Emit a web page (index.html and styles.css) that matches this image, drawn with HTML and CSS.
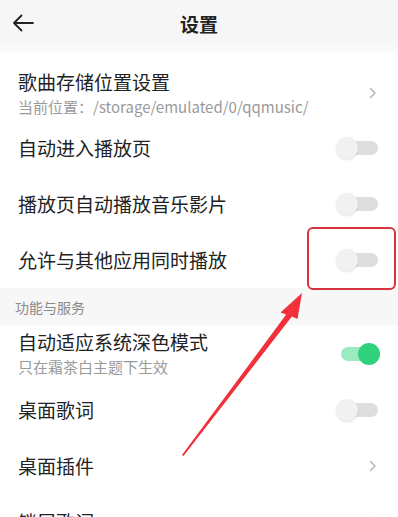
FILE: index.html
```html
<!DOCTYPE html>
<html lang="zh">
<head>
<meta charset="utf-8">
<link rel="stylesheet" href="styles.css">
</head>
<body>
<div class="page">
  <header class="topbar">
    <svg class="back" width="22" height="18" viewBox="0 0 22 18"><path d="M21 9H2M9.5 1.5L2 9l7.5 7.5" fill="none" stroke="#222" stroke-width="1.8" stroke-linecap="round" stroke-linejoin="round"/></svg>
    <h1 class="title">设置</h1>
  </header>

  <div class="row row-first">
    <div class="texts">
      <div class="label">歌曲存储位置设置</div>
      <div class="sub">当前位置：/storage/emulated/0/qqmusic/</div>
    </div>
    <svg class="chev" width="8" height="12" viewBox="0 0 8 12"><path d="M1.5 1.5L6 6l-4.5 4.5" fill="none" stroke="#b5b5b5" stroke-width="1.5" stroke-linecap="round" stroke-linejoin="round"/></svg>
  </div>

  <div class="row">
    <div class="label">自动进入播放页</div>
    <span class="switch"><span class="knob"></span></span>
  </div>
  <div class="row">
    <div class="label">播放页自动播放音乐影片</div>
    <span class="switch"><span class="knob"></span></span>
  </div>
  <div class="row">
    <div class="label">允许与其他应用同时播放</div>
    <span class="switch"><span class="knob"></span></span>
  </div>

  <div class="section">功能与服务</div>

  <div class="row row-two">
    <div class="texts">
      <div class="label">自动适应系统深色模式</div>
      <div class="sub">只在霜茶白主题下生效</div>
    </div>
    <span class="switch on"><span class="knob"></span></span>
  </div>
  <div class="row">
    <div class="label">桌面歌词</div>
    <span class="switch"><span class="knob"></span></span>
  </div>
  <div class="row">
    <div class="label">桌面插件</div>
    <svg class="chev" width="8" height="12" viewBox="0 0 8 12"><path d="M1.5 1.5L6 6l-4.5 4.5" fill="none" stroke="#b5b5b5" stroke-width="1.5" stroke-linecap="round" stroke-linejoin="round"/></svg>
  </div>
  <div class="row">
    <div class="label">锁屏歌词</div>
    <svg class="chev" width="8" height="12" viewBox="0 0 8 12"><path d="M1.5 1.5L6 6l-4.5 4.5" fill="none" stroke="#b5b5b5" stroke-width="1.5" stroke-linecap="round" stroke-linejoin="round"/></svg>
  </div>

  <div class="highlight"></div>
  <svg class="arrow" width="398" height="517" viewBox="0 0 398 517"><polygon points="182,455 286.2,314.6 280.5,312.5 302,293 297.5,319 291.9,316.4 183.5,456" fill="#f0303a"/></svg>
</div>
</body>
</html>
```

FILE: styles.css
```css
* { box-sizing: border-box; margin: 0; padding: 0; }
html, body { width: 398px; height: 517px; overflow: hidden; background: #fff; }
body {
  font-family: "Noto Sans CJK SC", "Noto Sans", sans-serif;
  color: #222;
}
.page { position: relative; width: 398px; height: 517px; overflow: hidden; }

.topbar {
  height: 52px;
  background: linear-gradient(#f6f6f6 0, #f6f6f6 40px, #fbfbfb 52px);
  display: flex;
  align-items: center;
  justify-content: center;
  position: relative;
}
.back { position: absolute; left: 12px; top: 14px; }
.title { font-size: 19px; font-weight: 700; color: #222; line-height: 1; margin-top: -6px; }

.row {
  height: 56px;
  display: flex;
  align-items: center;
  justify-content: space-between;
  padding: 0 20px 0 18px;
}
.row-first { height: 68px; padding-top: 14px; }
.row-two { height: 57px; }
.texts { display: flex; flex-direction: column; }
.label { font-size: 19px; line-height: 22px; color: #222; }
.sub { font-size: 15px; line-height: 18px; color: #9a9a9a; margin-top: 5px; }
.chev { margin-right: 1px; }

.section {
  height: 37px;
  background: #f7f7f7;
  font-size: 14px;
  color: #8a8a8a;
  padding-left: 15px;
  display: flex;
  align-items: center;
}

.switch {
  position: relative;
  width: 42px;
  height: 22px;
  display: block;
}
.switch::before {
  content: "";
  position: absolute;
  left: 3px; right: 0; top: 4px; height: 14px;
  border-radius: 7px;
  background: #dedede;
}
.switch .knob {
  position: absolute;
  left: 0; top: 0;
  width: 22px; height: 22px;
  border-radius: 50%;
  background: #f1f1f1;
  box-shadow: 0 1px 2px rgba(0,0,0,0.12);
}
.switch.on { margin-right: -2px; }
.switch.on::before { background: #9ceac0; }
.switch.on .knob { left: auto; right: 0; background: #2fd17d; box-shadow: none; }

.highlight {
  position: absolute;
  left: 307px; top: 227px;
  width: 89px; height: 63px;
  border: 2px solid #d9333f;
  border-radius: 6px;
}
.arrow { position: absolute; left: 0; top: 0; }
```
